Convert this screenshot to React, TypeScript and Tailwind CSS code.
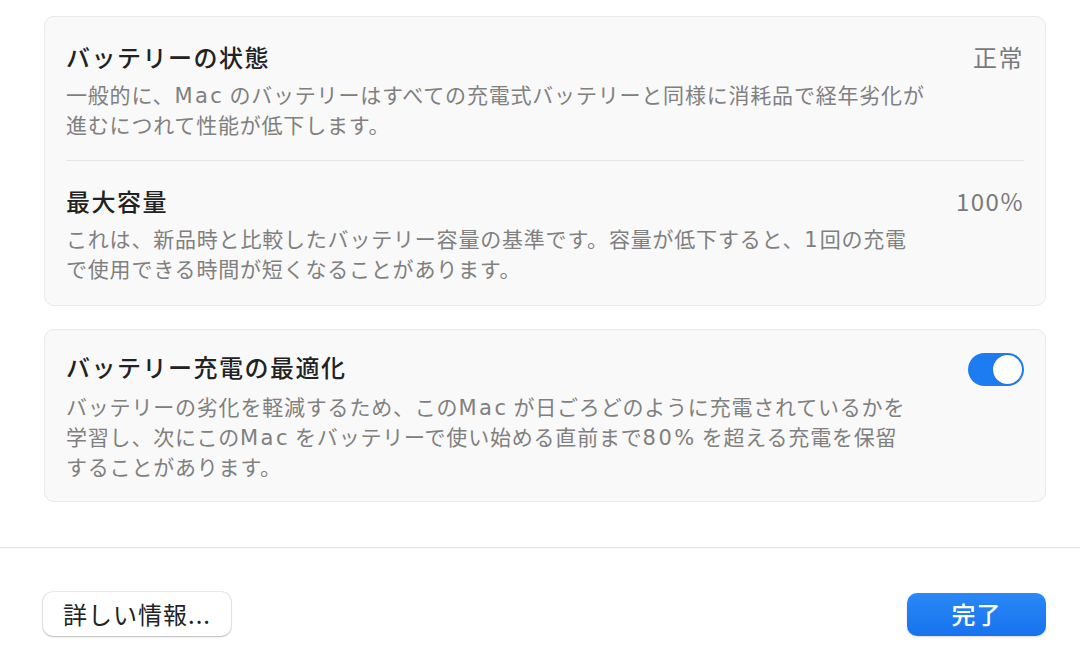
import type { ReactNode } from "react";

const font = "font-['Noto_Sans_CJK_JP','Noto_Sans',sans-serif]";

// 和文中の英数字（やや幅広の欧文）
function L({ children, tight }: { children: ReactNode; tight?: boolean }) {
  return (
    <span
      className={`${tight ? "mr-[1px] tracking-[1px]" : "mr-[5px] tracking-[2.5px]"} font-['DejaVu_Sans',sans-serif] text-[21px] leading-none`}
    >
      {children}
    </span>
  );
}

function Row({
  title,
  value,
  lines,
  last,
}: {
  title: string;
  value?: string;
  lines: ReactNode[];
  last?: boolean;
}) {
  return (
    <div
      className={`${last ? "pb-[22px]" : "border-b border-[#e6e6e6] pb-[21px]"} flex items-start justify-between pt-[24px]`}
    >
      <div>
        <h2 className="text-[24px] leading-[32px] font-medium tracking-[1.5px] text-[#222]">{title}</h2>
        <p className="mt-[6px] text-[21px] leading-[30px] tracking-[0.8px] text-[#808080]">
          {lines.map((l, i) => (
            <span key={i} className="block h-[30px]">
              {l}
            </span>
          ))}
        </p>
      </div>
      {value && <span className="text-[24px] leading-[32px] tracking-[1.5px] text-[#7a7a7a]">{value}</span>}
    </div>
  );
}

export default function App() {
  return (
    <div className={`${font} flex h-[655px] w-[1080px] flex-col bg-white`}>
      <div className="flex flex-col gap-[23px] pt-[16px] pr-[34px] pl-[44px]">
        {/* バッテリー情報 */}
        <section className="rounded-[10px] border border-[#e9e9e9] bg-[#f9f9f9] px-[21px]">
          <Row
            title="バッテリーの状態"
            value="正常"
            lines={[
              <>
                一般的に、<L>Mac</L>のバッテリーはすべての充電式バッテリーと同様に消耗品で経年劣化が
              </>,
              "進むにつれて性能が低下します。",
            ]}
          />
          <Row
            title="最大容量"
            value="100%"
            last
            lines={[
              <>
                これは、新品時と比較したバッテリー容量の基準です。容量が低下すると、<L tight>1</L>回の充電
              </>,
              "で使用できる時間が短くなることがあります。",
            ]}
          />
        </section>

        {/* 充電の最適化 */}
        <section className="flex items-start justify-between rounded-[10px] border border-[#e9e9e9] bg-[#f9f9f9] px-[21px] pt-[21px] pb-[20px]">
          <div>
            <h2 className="text-[24px] leading-[32px] font-medium tracking-[1.5px] text-[#222]">
              バッテリー充電の最適化
            </h2>
            <p className="mt-[8px] text-[21px] leading-[30px] tracking-[0.8px] text-[#808080]">
              <span className="block h-[30px]">
                バッテリーの劣化を軽減するため、この<L>Mac</L>が日ごろどのように充電されているかを
              </span>
              <span className="block h-[30px]">
                学習し、次にこの<L>Mac</L>をバッテリーで使い始める直前まで<L>80%</L>を超える充電を保留
              </span>
              <span className="block h-[30px]">することがあります。</span>
            </p>
          </div>
          <button
            type="button"
            className="mt-[2px] flex h-[33px] w-[56px] shrink-0 items-center justify-end rounded-full bg-[#1d7cf2] pr-[2px]"
          >
            <span className="size-[29px] rounded-full bg-white shadow-[0_0_1px_rgba(0,0,0,0.4)]" />
          </button>
        </section>
      </div>

      <div className="mt-[45px] border-t border-[#e2e2e2]" />

      <div className="flex items-center justify-between pt-[44px] pr-[34px] pl-[43px]">
        <button
          type="button"
          className="flex h-[44px] w-[188px] items-center justify-center rounded-[10px] bg-white text-[24px] tracking-[1px] text-[#222] shadow-[0_0_0_1px_rgba(0,0,0,0.08),0_1px_2px_rgba(0,0,0,0.2)]"
        >
          詳しい情報...
        </button>
        <button
          type="button"
          className="flex h-[43px] w-[139px] items-center justify-center rounded-[10px] bg-gradient-to-b from-[#2a88f7] to-[#1673ee] text-[24px] font-medium tracking-[1px] text-white shadow-[0_1px_2px_rgba(0,0,0,0.15)]"
        >
          完了
        </button>
      </div>
    </div>
  );
}
